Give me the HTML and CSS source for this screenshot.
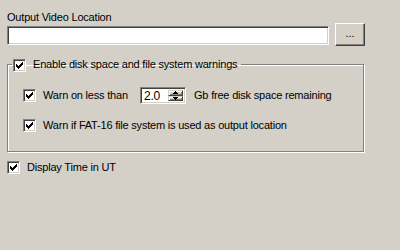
FILE: index.html
```html
<!DOCTYPE html>
<html lang="en">
<head>
    <meta charset="UTF-8">
    <title>Output Options</title>
    <link rel="stylesheet" href="styles.css">
</head>
<body>
    <div class="page">
        <div class="field-label">Output Video Location</div>
        <div class="path-row">
            <div class="textbox"></div>
            <div class="browse">...</div>
        </div>

        <fieldset class="group">
            <legend class="group-title">
                <span class="check-line">
                    <span class="check"><svg width="11" height="11" viewBox="0 0 11 11"><path d="M2 4h1v3h-1zM3 5h1v3h-1zM4 6h1v3h-1zM5 5h1v3h-1zM6 4h1v3h-1zM7 3h1v3h-1zM8 2h1v3h-1z" fill="#000"/></svg></span>
                    <span>Enable disk space and file system warnings</span>
                </span>
            </legend>

            <div class="group-body">
                <div class="option-row">
                    <span class="check"><svg width="11" height="11" viewBox="0 0 11 11"><path d="M2 4h1v3h-1zM3 5h1v3h-1zM4 6h1v3h-1zM5 5h1v3h-1zM6 4h1v3h-1zM7 3h1v3h-1zM8 2h1v3h-1z" fill="#000"/></svg></span>
                    <span class="threshold-label">Warn on less than</span>
                    <div class="spin">
                        <span class="spin-value">2.0</span>
                        <div class="spin-buttons">
                            <span class="spin-btn"><svg width="5" height="3" viewBox="0 0 5 3"><path d="M2 0h1v1h1v1h1v1H0V2h1V1h1z" fill="#000"/></svg></span>
                            <span class="spin-btn"><svg width="5" height="3" viewBox="0 0 5 3"><path d="M0 0h5v1H4v1H3v1H2V2H1V1H0z" fill="#000"/></svg></span>
                        </div>
                    </div>
                    <span class="unit-label">Gb free disk space remaining</span>
                </div>
                <div class="option-row second">
                    <span class="check"><svg width="11" height="11" viewBox="0 0 11 11"><path d="M2 4h1v3h-1zM3 5h1v3h-1zM4 6h1v3h-1zM5 5h1v3h-1zM6 4h1v3h-1zM7 3h1v3h-1zM8 2h1v3h-1z" fill="#000"/></svg></span>
                    <span>Warn if FAT-16 file system is used as output location</span>
                </div>
            </div>
        </fieldset>

        <div class="option-row standalone">
            <span class="check"><svg width="11" height="11" viewBox="0 0 11 11"><path d="M2 4h1v3h-1zM3 5h1v3h-1zM4 6h1v3h-1zM5 5h1v3h-1zM6 4h1v3h-1zM7 3h1v3h-1zM8 2h1v3h-1z" fill="#000"/></svg></span>
            <span>Display Time in UT</span>
        </div>
    </div>
</body>
</html>
```

FILE: styles.css
```css
:root {
    --face: #d4d0c8;
    --shadow: #808080;
    --dark: #404040;
    --light: #fff;
}

* {
    box-sizing: border-box;
}

body {
    margin: 0;
    background-color: var(--face);
    font-family: "Liberation Sans", Arial, sans-serif;
    font-size: 11px;
    letter-spacing: -0.2px;
    color: #000;
}

.page {
    width: 400px;
    height: 250px;
    padding: 11px 0 0 7px;
}

.field-label {
    height: 12px;
    line-height: 12px;
}

.path-row {
    display: flex;
    align-items: flex-start;
}

/* sunken edit box */
.textbox {
    width: 322px;
    height: 19px;
    margin-top: 3px;
    background-color: #fff;
    border: 1px solid;
    border-color: var(--shadow) var(--light) var(--light) var(--shadow);
    box-shadow: inset 1px 1px var(--dark), inset -1px -1px var(--face);
}

/* raised push button */
.browse {
    width: 30px;
    height: 23px;
    margin-left: 6px;
    border: 1px solid;
    border-color: var(--light) var(--dark) var(--dark) var(--light);
    box-shadow: inset -1px -1px var(--shadow), inset 1px 1px var(--face);
    display: flex;
    align-items: center;
    justify-content: center;
    line-height: 11px;
    letter-spacing: 0;
    padding-bottom: 2px;
}

.group {
    width: 357px;
    margin: 13px 0 0;
    padding: 0;
    min-width: 0;
    border: 1px solid var(--shadow);
    box-shadow: inset 1px 1px var(--light), 1px 1px var(--light);
}

.group-title {
    margin-left: 4px;
    padding: 0 4px 0 1px;
}

.check-line {
    display: flex;
    align-items: flex-start;
    height: 11px;
    line-height: 11px;
}

.check {
    flex: none;
    width: 13px;
    height: 13px;
    margin-right: 7px;
    background-color: #fff;
    border: 1px solid;
    border-color: var(--shadow) var(--light) var(--light) var(--shadow);
    box-shadow: inset 1px 1px var(--dark), inset -1px -1px var(--face);
}

.check svg {
    display: block;
}

.group-body {
    padding: 17px 0 17px 15px;
}

.option-row {
    display: flex;
    align-items: center;
    height: 17px;
    line-height: 13px;
}

.option-row.second {
    margin-top: 13px;
}

.option-row.standalone {
    margin-top: 7px;
}

.threshold-label {
    width: 97px;
}

.spin {
    display: flex;
    width: 46px;
    height: 17px;
    background-color: #fff;
    border: 1px solid;
    border-color: var(--shadow) var(--light) var(--light) var(--shadow);
    box-shadow: inset 1px 1px var(--dark), inset -1px -1px var(--face);
    padding: 2px 2px 2px 3px;
}

.spin-value {
    flex: 1;
    line-height: 13px;
    font-size: 12px;
}

.spin-buttons {
    display: flex;
    flex-direction: column;
    width: 15px;
}

.spin-btn {
    flex: 1;
    display: flex;
    align-items: center;
    justify-content: center;
    background-color: var(--face);
    border: 1px solid;
    border-color: var(--face) var(--dark) var(--dark) var(--face);
    box-shadow: inset 1px 1px var(--light), inset -1px -1px var(--shadow);
}

.spin-btn svg {
    display: block;
}

.unit-label {
    margin-left: 8px;
}
```
